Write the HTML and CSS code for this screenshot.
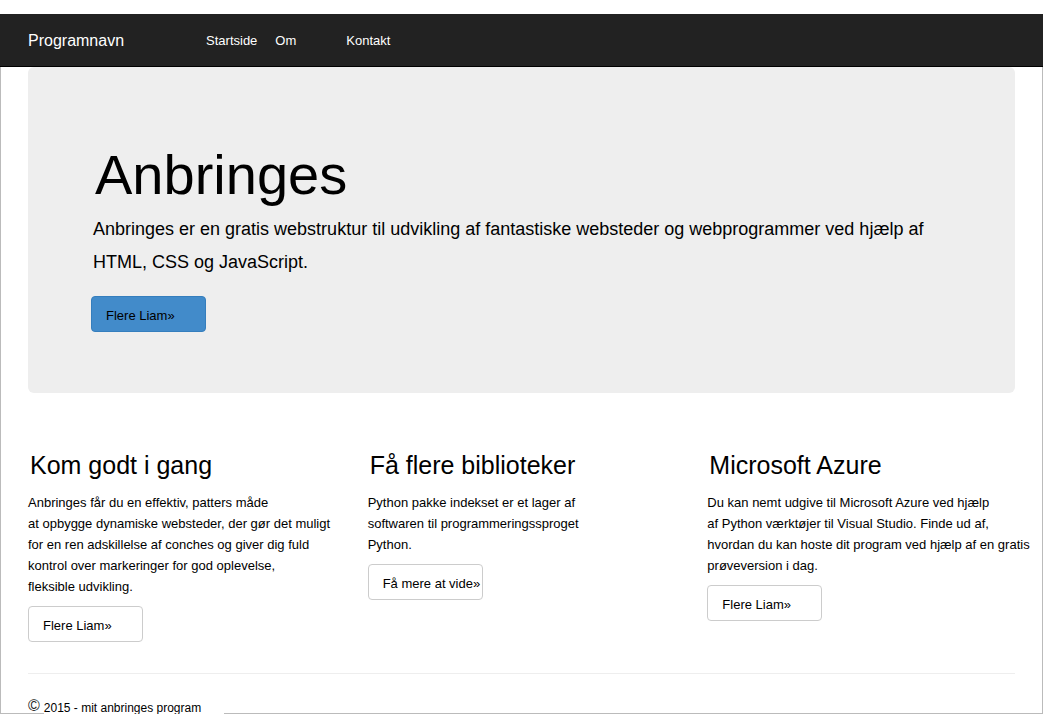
FILE: index.html
```html
<!DOCTYPE html>
<html lang="da">
<head>
<meta charset="utf-8">
<meta name="viewport" content="width=device-width, initial-scale=1">
<title>Programnavn</title>
<link rel="stylesheet" href="styles.css">
</head>
<body>
<header class="navbar">
  <a class="brand" href="#">Programnavn</a>
  <nav class="nav">
    <a class="nav-link" href="#">Startside</a>
    <a class="nav-link nav-link-wide" href="#">Om</a>
    <a class="nav-link" href="#">Kontakt</a>
  </nav>
</header>
<div class="page">
  <main>
    <section class="jumbotron">
      <h1 class="title">Anbringes</h1>
      <p class="lead">Anbringes er en gratis webstruktur til udvikling af fantastiske websteder og webprogrammer ved hjælp af HTML, CSS og JavaScript.</p>
      <a class="btn btn-primary" href="#">Flere Liam»</a>
    </section>
    <div class="columns">
      <section class="column">
        <h2 class="heading">Kom godt i gang</h2>
        <p class="text">Anbringes får du en effektiv, patters måde<br>at opbygge dynamiske websteder, der gør det muligt<br>for en ren adskillelse af conches og giver dig fuld<br>kontrol over markeringer for god oplevelse,<br>fleksible udvikling.</p>
        <a class="btn" href="#">Flere Liam»</a>
      </section>
      <section class="column">
        <h2 class="heading">Få flere biblioteker</h2>
        <p class="text">Python pakke indekset er et lager af<br>softwaren til programmeringssproget<br>Python.</p>
        <a class="btn" href="#">Få mere at vide»</a>
      </section>
      <section class="column">
        <h2 class="heading">Microsoft Azure</h2>
        <p class="text">Du kan nemt udgive til Microsoft Azure ved hjælp<br>af Python værktøjer til Visual Studio. Finde ud af,<br>hvordan du kan hoste dit program ved hjælp af en gratis<br>prøveversion i dag.</p>
        <a class="btn" href="#">Flere Liam»</a>
      </section>
    </div>
  </main>
  <footer class="footer">
    <span class="copyright">©</span>
    <span class="footer-text">2015 - mit anbringes program</span>
  </footer>
</div>
</body>
</html>
```
FILE: styles.css
```css
* {
  box-sizing: border-box;
}

body {
  display: flex;
  flex-direction: column;
  min-height: 100vh;
  margin: 0;
  padding-top: 14px;
  background: #fff;
  color: #000;
  font: 13px/21px "Liberation Sans", Arial, sans-serif;
}

.navbar {
  display: flex;
  align-items: center;
  gap: 82px;
  height: 53px;
  padding: 0 28px;
  background: #222;
  border-bottom: 1px solid #000;
}

.brand,
.nav-link {
  color: #fff;
  text-decoration: none;
}

.brand {
  font-size: 16px;
}

.nav {
  display: flex;
  gap: 18px;
}

.nav-link-wide {
  min-width: 53px;
}

.page {
  flex: 1;
  padding: 0 27px;
  border: 1px solid #bbb;
  border-top: 0;
}

.jumbotron {
  padding: 76px 63px 61px;
  background: #eee;
  border-radius: 6px;
}

.title {
  margin: 0 0 6px;
  padding-left: 4px;
  font-size: 56px;
  font-weight: 400;
  line-height: 64px;
}

.lead {
  margin: 0 0 17px;
  padding-left: 2px;
  font-size: 18px;
  line-height: 33px;
}

.btn {
  display: block;
  width: 115px;
  height: 36px;
  padding: 8px 0 0 14px;
  border: 1px solid #ccc;
  border-radius: 4px;
  background: #fff;
  color: #000;
  white-space: nowrap;
  text-decoration: none;
}

.btn-primary {
  background: #428bca;
  border-color: #357ebd;
}

.columns {
  display: grid;
  grid-template-columns: repeat(3, minmax(0, 1fr));
  gap: 32px;
  padding: 56px 0 31px;
  border-bottom: 1px solid #eee;
}

.heading {
  margin: 0 0 10px;
  padding-left: 2px;
  font-size: 25px;
  font-weight: 400;
  line-height: 33px;
}

.text {
  margin: 0 0 9px;
  white-space: nowrap;
}

.footer {
  display: flex;
  gap: 4px;
  height: 39px;
  padding-top: 24px;
}

.copyright {
  color: #222;
  font-size: 16px;
  line-height: 16px;
}

.footer-text {
  height: 16px;
  padding-right: 23px;
  background: #fff;
  font-size: 12px;
}
```
